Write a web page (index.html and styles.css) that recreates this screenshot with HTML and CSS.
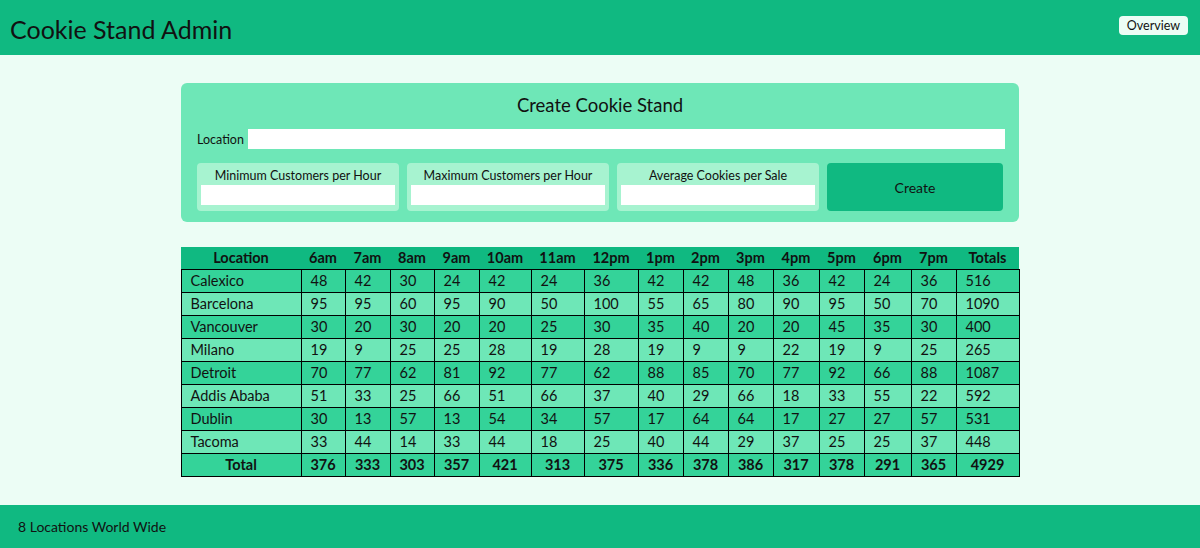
FILE: index.html
```html
<!DOCTYPE html>
<html>
<head>
<meta charset="utf-8">
<link rel="stylesheet" href="styles.css">
</head>
<body>
<div class="page">
  <header class="topbar">
    <h1 class="brand">Cookie Stand Admin</h1>
    <button class="overview">Overview</button>
  </header>
  <main class="main">
    <form class="create-form">
      <h2 class="form-title">Create Cookie Stand</h2>
      <div class="loc-row">
        <label class="loc-label">Location</label>
        <input class="loc-input" type="text">
      </div>
      <div class="fields">
        <div class="field"><label>Minimum Customers per Hour</label><input type="text"></div>
        <div class="field"><label>Maximum Customers per Hour</label><input type="text"></div>
        <div class="field"><label>Average Cookies per Sale</label><input type="text"></div>
        <button class="create-btn" type="button">Create</button>
      </div>
    </form>
    <table class="report">
      <colgroup>
        <col class="c-loc"><col class="c-44"><col class="c-45"><col class="c-44"><col class="c-45"><col class="c-52"><col class="c-53"><col class="c-54"><col class="c-45"><col class="c-45"><col class="c-45"><col class="c-46"><col class="c-45"><col class="c-47"><col class="c-45"><col class="c-tot">
      </colgroup>
      <thead>
        <tr><th>Location</th><th>6am</th><th>7am</th><th>8am</th><th>9am</th><th>10am</th><th>11am</th><th>12pm</th><th>1pm</th><th>2pm</th><th>3pm</th><th>4pm</th><th>5pm</th><th>6pm</th><th>7pm</th><th>Totals</th></tr>
      </thead>
      <tbody>
        <tr><td>Calexico</td><td>48</td><td>42</td><td>30</td><td>24</td><td>42</td><td>24</td><td>36</td><td>42</td><td>42</td><td>48</td><td>36</td><td>42</td><td>24</td><td>36</td><td>516</td></tr>
        <tr><td>Barcelona</td><td>95</td><td>95</td><td>60</td><td>95</td><td>90</td><td>50</td><td>100</td><td>55</td><td>65</td><td>80</td><td>90</td><td>95</td><td>50</td><td>70</td><td>1090</td></tr>
        <tr><td>Vancouver</td><td>30</td><td>20</td><td>30</td><td>20</td><td>20</td><td>25</td><td>30</td><td>35</td><td>40</td><td>20</td><td>20</td><td>45</td><td>35</td><td>30</td><td>400</td></tr>
        <tr><td>Milano</td><td>19</td><td>9</td><td>25</td><td>25</td><td>28</td><td>19</td><td>28</td><td>19</td><td>9</td><td>9</td><td>22</td><td>19</td><td>9</td><td>25</td><td>265</td></tr>
        <tr><td>Detroit</td><td>70</td><td>77</td><td>62</td><td>81</td><td>92</td><td>77</td><td>62</td><td>88</td><td>85</td><td>70</td><td>77</td><td>92</td><td>66</td><td>88</td><td>1087</td></tr>
        <tr><td>Addis Ababa</td><td>51</td><td>33</td><td>25</td><td>66</td><td>51</td><td>66</td><td>37</td><td>40</td><td>29</td><td>66</td><td>18</td><td>33</td><td>55</td><td>22</td><td>592</td></tr>
        <tr><td>Dublin</td><td>30</td><td>13</td><td>57</td><td>13</td><td>54</td><td>34</td><td>57</td><td>17</td><td>64</td><td>64</td><td>17</td><td>27</td><td>27</td><td>57</td><td>531</td></tr>
        <tr><td>Tacoma</td><td>33</td><td>44</td><td>14</td><td>33</td><td>44</td><td>18</td><td>25</td><td>40</td><td>44</td><td>29</td><td>37</td><td>25</td><td>25</td><td>37</td><td>448</td></tr>
      </tbody>
      <tfoot>
        <tr><th>Total</th><th>376</th><th>333</th><th>303</th><th>357</th><th>421</th><th>313</th><th>375</th><th>336</th><th>378</th><th>386</th><th>317</th><th>378</th><th>291</th><th>365</th><th>4929</th></tr>
      </tfoot>
    </table>
  </main>
  <footer class="footer">8 Locations World Wide</footer>
</div>
</body>
</html>
```
FILE: styles.css
```css
* { box-sizing: border-box; }
html, body { margin: 0; padding: 0; }
body {
  font-family: Lato, "Open Sans", sans-serif;
  color: #111;
  background: #ecfdf5;
}
.page {
  height: 548px;
  display: flex;
  flex-direction: column;
}
.topbar {
  height: 55px;
  background: #10b981;
  display: flex;
  align-items: center;
  justify-content: space-between;
  padding: 0 12px 0 10px;
}
.brand {
  margin: 0;
  font-size: 25px;
  font-weight: 400;
  line-height: 32px;
  padding-top: 2px;
}
.overview {
  align-self: flex-start;
  margin-top: 16px;
  font-family: inherit;
  font-size: 12.5px;
  background: #ecfdf5;
  border: none;
  border-radius: 4px;
  height: 19px;
  padding: 0 8px;
  color: #111;
}
.main {
  flex: 1;
  padding-top: 28px;
}
.create-form {
  width: 838px;
  margin: 0 auto;
  background: #6ee7b7;
  border-radius: 6px;
  padding: 8px 16px 11px 16px;
}
.form-title {
  margin: 0;
  text-align: center;
  font-size: 18.5px;
  font-weight: 400;
  line-height: 28px;
}
.loc-row {
  display: flex;
  align-items: flex-end;
  gap: 4px;
  margin-top: 10px;
  margin-right: -2px;
}
.loc-label { font-size: 12.5px; line-height: 18px; }
.loc-input {
  flex: 1;
  height: 20px;
  border: none;
  padding: 0;
  background: #fff;
}
.fields {
  display: flex;
  gap: 8px;
  margin-top: 14px;
}
.field {
  width: 202px;
  background: #a7f3d0;
  border-radius: 4px;
  padding: 4px 4px 6px 4px;
  display: flex;
  flex-direction: column;
}
.field label {
  font-size: 12.5px;
  line-height: 18px;
  text-align: center;
}
.field input {
  height: 20px;
  border: none;
  padding: 0;
  background: #fff;
}
.create-btn {
  flex: 1;
  height: 48px;
  background: #10b981;
  border: none;
  border-radius: 4px;
  font-family: inherit;
  font-size: 14px;
  color: #111;
}
.report {
  width: 838px;
  margin: 25px auto 0;
  border-collapse: collapse;
  table-layout: fixed;
  font-size: 14.5px;
}
.c-loc { width: 120px; }
.c-44 { width: 44px; }
.c-45 { width: 45px; }
.c-46 { width: 46px; }
.c-47 { width: 47px; }
.c-52 { width: 52px; }
.c-53 { width: 53px; }
.c-54 { width: 54px; }
.c-tot { width: 63px; }
.report thead th {
  background: #10b981;
  font-weight: 700;
  line-height: 22px;
  padding: 0;
  text-align: center;
}
.report td {
  border: 1px solid #000;
  padding: 0 0 0 9px;
  line-height: 22px;
  text-align: left;
  white-space: nowrap;
}
.report tbody tr:nth-child(odd) td { background: #34d399; }
.report tbody tr:nth-child(even) td { background: #6ee7b7; }
.report tfoot th {
  border: 1px solid #000;
  background: #34d399;
  font-weight: 700;
  line-height: 22px;
  padding: 0;
  text-align: center;
}
.footer {
  height: 43px;
  background: #10b981;
  display: flex;
  align-items: center;
  padding-left: 18px;
  font-size: 14px;
}
```
